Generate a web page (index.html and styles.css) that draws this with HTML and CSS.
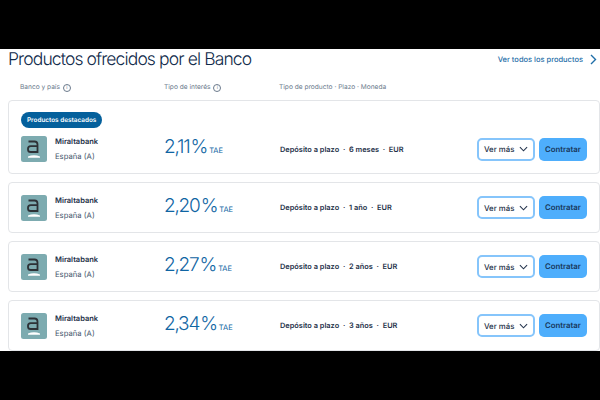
FILE: index.html
```html
<!DOCTYPE html>
<html>
<head>
    <meta name="viewport" content="width=device-width, initial-scale=1">
    <title>Productos ofrecidos por el Banco</title>
    <link rel="stylesheet" href="styles.css">
</head>
<body>
    <div class="bar"></div>

    <div class="content">
        <div class="header">
            <h1>Productos ofrecidos por el Banco</h1>
            <a class="all-link">Ver todos los productos
                <svg width="7" height="11" viewBox="0 0 7 11"><path d="M1 1l4.5 4.5L1 10" fill="none" stroke="#1f6ea8" stroke-width="1.4"/></svg>
            </a>
        </div>

        <div class="columns">
            <div class="col-bank">Banco y país <span class="info">i</span></div>
            <div class="col-rate">Tipo de interés <span class="info">i</span></div>
            <div>Tipo de producto · Plazo · Moneda</div>
        </div>

        <div class="card featured">
            <div class="badge">Productos destacados</div>
            <div class="row">
                <div class="col-bank bank">
                    <svg class="logo" viewBox="0 0 26 26"><rect width="26" height="26" rx="2.5" fill="#7dabb0"/><path d="M7.5 5.5h6q3 0 3 3v7.5h-6.8q-2.7 0-2.7-2.6v-.6q0-2.6 2.7-2.6h6.8" fill="none" stroke="#2d3136" stroke-width="1.8"/><path d="M7 20.6q6-2.8 12 0v1.2H7z" fill="#fff"/></svg>
                    <div><div class="bank-name">Miraltabank</div><div class="country">España (A)</div></div>
                </div>
                <div class="col-rate rate">2,11<span class="pct">%</span><span class="tae">TAE</span></div>
                <div class="product">Depósito a plazo &nbsp;·&nbsp; 6 meses &nbsp;·&nbsp; EUR</div>
                <div class="select">Ver más <svg width="9" height="6" viewBox="0 0 10 6"><path d="M1 1l4 4 4-4" fill="none" stroke="#24344d" stroke-width="1.2"/></svg></div>
                <div class="btn">Contratar</div>
            </div>
        </div>

        <div class="card">
            <div class="row">
                <div class="col-bank bank">
                    <svg class="logo" viewBox="0 0 26 26"><rect width="26" height="26" rx="2.5" fill="#7dabb0"/><path d="M7.5 5.5h6q3 0 3 3v7.5h-6.8q-2.7 0-2.7-2.6v-.6q0-2.6 2.7-2.6h6.8" fill="none" stroke="#2d3136" stroke-width="1.8"/><path d="M7 20.6q6-2.8 12 0v1.2H7z" fill="#fff"/></svg>
                    <div><div class="bank-name">Miraltabank</div><div class="country">España (A)</div></div>
                </div>
                <div class="col-rate rate">2,20<span class="pct">%</span><span class="tae">TAE</span></div>
                <div class="product">Depósito a plazo &nbsp;·&nbsp; 1 año &nbsp;·&nbsp; EUR</div>
                <div class="select">Ver más <svg width="9" height="6" viewBox="0 0 10 6"><path d="M1 1l4 4 4-4" fill="none" stroke="#24344d" stroke-width="1.2"/></svg></div>
                <div class="btn">Contratar</div>
            </div>
        </div>

        <div class="card">
            <div class="row">
                <div class="col-bank bank">
                    <svg class="logo" viewBox="0 0 26 26"><rect width="26" height="26" rx="2.5" fill="#7dabb0"/><path d="M7.5 5.5h6q3 0 3 3v7.5h-6.8q-2.7 0-2.7-2.6v-.6q0-2.6 2.7-2.6h6.8" fill="none" stroke="#2d3136" stroke-width="1.8"/><path d="M7 20.6q6-2.8 12 0v1.2H7z" fill="#fff"/></svg>
                    <div><div class="bank-name">Miraltabank</div><div class="country">España (A)</div></div>
                </div>
                <div class="col-rate rate">2,27<span class="pct">%</span><span class="tae">TAE</span></div>
                <div class="product">Depósito a plazo &nbsp;·&nbsp; 2 años &nbsp;·&nbsp; EUR</div>
                <div class="select">Ver más <svg width="9" height="6" viewBox="0 0 10 6"><path d="M1 1l4 4 4-4" fill="none" stroke="#24344d" stroke-width="1.2"/></svg></div>
                <div class="btn">Contratar</div>
            </div>
        </div>

        <div class="card">
            <div class="row">
                <div class="col-bank bank">
                    <svg class="logo" viewBox="0 0 26 26"><rect width="26" height="26" rx="2.5" fill="#7dabb0"/><path d="M7.5 5.5h6q3 0 3 3v7.5h-6.8q-2.7 0-2.7-2.6v-.6q0-2.6 2.7-2.6h6.8" fill="none" stroke="#2d3136" stroke-width="1.8"/><path d="M7 20.6q6-2.8 12 0v1.2H7z" fill="#fff"/></svg>
                    <div><div class="bank-name">Miraltabank</div><div class="country">España (A)</div></div>
                </div>
                <div class="col-rate rate">2,34<span class="pct">%</span><span class="tae">TAE</span></div>
                <div class="product">Depósito a plazo &nbsp;·&nbsp; 3 años &nbsp;·&nbsp; EUR</div>
                <div class="select">Ver más <svg width="9" height="6" viewBox="0 0 10 6"><path d="M1 1l4 4 4-4" fill="none" stroke="#24344d" stroke-width="1.2"/></svg></div>
                <div class="btn">Contratar</div>
            </div>
        </div>
    </div>

    <div class="bar"></div>
</body>
</html>
```

FILE: styles.css
```css
html, body {
    margin: 0;
    height: 400px;
    overflow: hidden;
}

body {
    font-family: Inter, "Liberation Sans", sans-serif;
    background-color: #000;
    color: #1d3048;
    text-rendering: geometricPrecision;
}

.bar {
    height: 49px;
    background-color: #000;
}

.content {
    height: 302px;
    overflow: hidden;
    background-color: #fff;
    padding-left: 8px;
    box-sizing: border-box;
}

.header {
    display: flex;
    justify-content: space-between;
    align-items: center;
    height: 21px;
    margin-bottom: 11px;
    padding-right: 3px;
}

h1 {
    margin: 0;
    font-size: 17.5px;
    font-weight: 300;
    letter-spacing: -0.88px;
    color: #0f2a4a;
    white-space: nowrap;
}

.all-link {
    display: flex;
    align-items: center;
    gap: 7px;
    font-size: 7.5px;
    font-weight: 500;
    color: #1f6ea8;
}

.columns {
    display: flex;
    align-items: center;
    height: 12px;
    padding-left: 12px;
    margin-bottom: 7px;
    font-size: 6.6px;
    color: #6b7a8c;
}

.col-bank {
    width: 144px;
    flex-shrink: 0;
}

.col-rate {
    width: 115px;
    flex-shrink: 0;
}

.info {
    display: inline-block;
    width: 6px;
    height: 6px;
    line-height: 6px;
    border: 1px solid #6b7a8c;
    border-radius: 50%;
    font-size: 5px;
    text-align: center;
    vertical-align: 0;
    margin-left: 1px;
}

.card {
    display: flex;
    flex-direction: column;
    justify-content: center;
    width: 592px;
    height: 51px;
    margin-bottom: 8px;
    padding: 0 12px;
    box-sizing: border-box;
    border: 1px solid #e3e5e8;
    border-radius: 4px;
    background-color: #fff;
}

.featured {
    height: 74px;
    justify-content: flex-start;
    padding-top: 11px;
}

.badge {
    align-self: flex-start;
    height: 16px;
    line-height: 16px;
    padding: 0 6px;
    margin-bottom: 7px;
    border-radius: 8px;
    background-color: #04609c;
    color: #fff;
    font-size: 6.4px;
    font-weight: 600;
}

.row {
    display: flex;
    align-items: center;
}

.bank {
    display: flex;
    align-items: center;
    gap: 8px;
}

.logo {
    width: 26px;
    height: 26px;
}

.bank-name {
    font-size: 7.5px;
    font-weight: 600;
    margin-bottom: 6px;
}

.country {
    font-size: 7.7px;
    color: #44566c;
}

.rate {
    font-size: 19px;
    line-height: 24px;
    font-weight: 300;
    letter-spacing: -1.2px;
    text-indent: -1px;
    color: #0f65a3;
    white-space: nowrap;
}

.pct {
    margin-left: 1px;
}

.tae {
    font-size: 7.5px;
    font-weight: 400;
    margin-left: 2px;
    letter-spacing: 0;
}

.product {
    flex: 1;
    font-size: 7.4px;
    font-weight: 600;
}

.select {
    display: flex;
    align-items: center;
    justify-content: space-between;
    width: 58px;
    height: 23px;
    padding: 0 5px;
    box-sizing: border-box;
    border: 2px solid #86c5fb;
    border-radius: 5px;
    font-size: 7.8px;
    font-weight: 500;
    white-space: nowrap;
    margin-right: 4px;
}

.btn {
    width: 48px;
    height: 23px;
    line-height: 23px;
    text-align: center;
    border-radius: 5px;
    background-color: #4eaefc;
    font-size: 7.8px;
    font-weight: 600;
    color: #17365a;
}
```
